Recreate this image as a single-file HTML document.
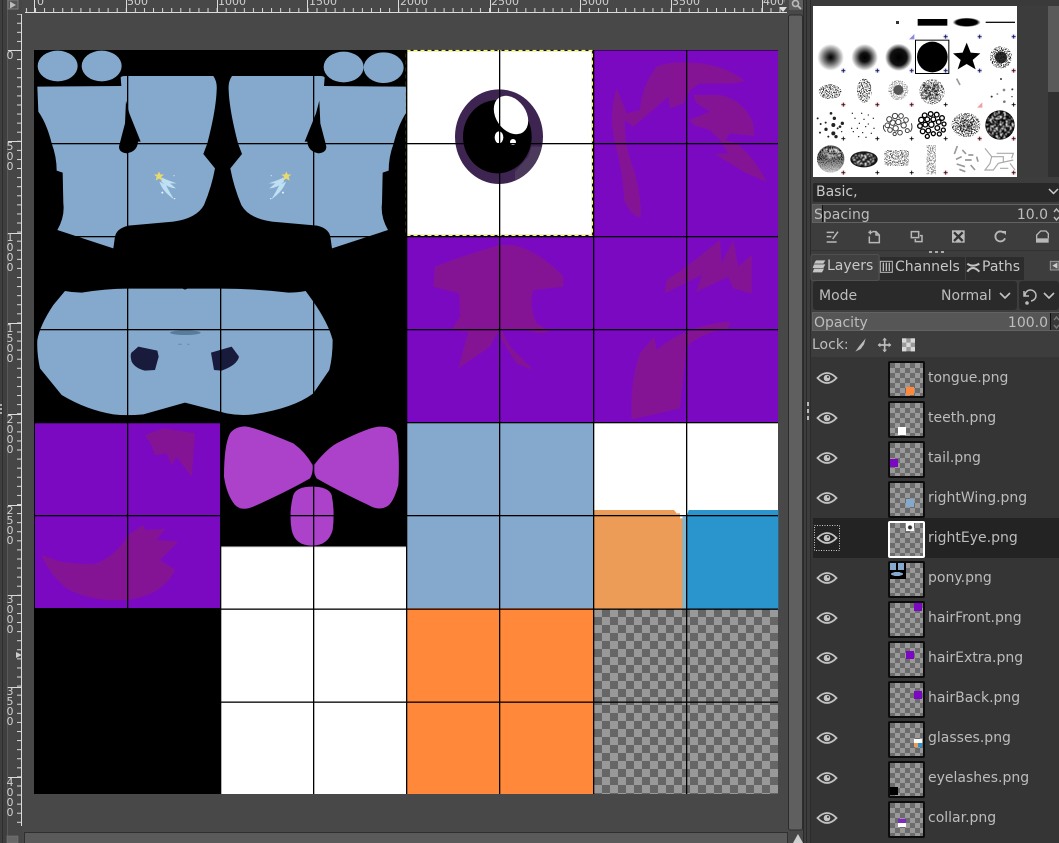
<!DOCTYPE html>
<html><head><meta charset="utf-8"><style>
html,body{margin:0;padding:0;background:#484848}
body{width:1059px;height:843px;position:relative;overflow:hidden;font-family:"DejaVu Sans",sans-serif;font-size:14px;color:#bdbdbd}
svg{position:absolute;left:0;top:0}
.t{position:absolute;white-space:nowrap;line-height:20px;height:20px}
.r{font-size:11px;color:#cfcfcf;line-height:10px;position:absolute}
.rv{font-size:11px;color:#cfcfcf;line-height:10px;position:absolute;left:6px;width:8px;text-align:center;white-space:pre-line}
.th{position:absolute;left:888px;width:33px;height:33px;border:2px solid #0c0c0c;border-radius:2px;background:conic-gradient(#999 25%,#6c6c6c 0 50%,#999 0 75%,#6c6c6c 0) 0 0/10px 10px}
.th i{position:absolute;display:block;width:8px;height:8px}
.l{position:absolute;left:928px;white-space:nowrap;line-height:20px;color:#bcbcbc}
</style></head><body>
<svg width="1059" height="843" viewBox="0 0 1059 843">
<defs>
<filter id="n" x="-10%" y="-10%" width="120%" height="120%"><feTurbulence type="fractalNoise" baseFrequency=".17" numOctaves="2" seed="3"/><feColorMatrix result="m" values="0 0 0 0 0 0 0 0 0 0 0 0 0 0 0 0 0 0 9 -4.5"/><feComposite in="SourceGraphic" in2="m" operator="in"/><feGaussianBlur stdDeviation="1.2"/></filter>
<filter id="n2" x="-10%" y="-10%" width="120%" height="120%"><feTurbulence type="fractalNoise" baseFrequency=".3" numOctaves="2" seed="8"/><feColorMatrix result="m" values="0 0 0 0 0 0 0 0 0 0 0 0 0 0 0 0 0 0 9 -4.4"/><feComposite in="SourceGraphic" in2="m" operator="in"/><feGaussianBlur stdDeviation="1"/></filter>
<filter id="bl" x="-10%" y="-10%" width="120%" height="120%"><feGaussianBlur stdDeviation="1"/></filter>
<radialGradient id="b1"><stop offset="0" stop-color="#000"/><stop offset=".2" stop-color="#222"/><stop offset="1" stop-color="#000" stop-opacity="0"/></radialGradient>
<radialGradient id="b2"><stop offset="0" stop-color="#000"/><stop offset=".35" stop-color="#111"/><stop offset="1" stop-color="#000" stop-opacity="0"/></radialGradient>
<radialGradient id="b3"><stop offset="0" stop-color="#000"/><stop offset=".6" stop-color="#111"/><stop offset="1" stop-color="#000" stop-opacity="0"/></radialGradient>
<radialGradient id="bg"><stop offset="0" stop-color="#000"/><stop offset=".75" stop-color="#000"/><stop offset="1" stop-color="#000" stop-opacity="0"/></radialGradient>
<linearGradient id="sg" x1="0" y1="0" x2="0" y2="1"><stop offset="0" stop-color="#000"/><stop offset=".45" stop-color="#111"/><stop offset="1" stop-color="#bbb"/></linearGradient>
<pattern id="ck" x="594" y="609" width="16" height="16" patternUnits="userSpaceOnUse"><rect width="16" height="16" fill="#666"/><rect width="8" height="8" fill="#999"/><rect x="8" y="8" width="8" height="8" fill="#999"/></pattern>
<pattern id="tx" x="35" y="0" width="9.08" height="4" patternUnits="userSpaceOnUse"><rect x="0" width="1" height="4" fill="#d8d8d8"/></pattern>
<pattern id="ty" x="0" y="50" width="4" height="9.08" patternUnits="userSpaceOnUse"><rect y="0" width="4" height="1" fill="#d8d8d8"/></pattern>
<g id="eye" fill="none" stroke="#c4c4c4"><path d="M-9.500 0Q0-10 9.500 0Q0 10-9.500 0Z" stroke-width="1.800"/><circle r="3.300" fill="#c4c4c4" stroke="none"/><circle cx="1" cy="-1" r="1" fill="#333" stroke="none"/></g>
<g id="pl"><path d="M-6 0H6M0-6V6" stroke="#000" stroke-width="2.600"/></g>
<g id="sl"><rect x="-6" y="-6" width="12" height="12" fill="#c8c8f0" opacity=".8"/><path d="M-6 0H6M0-6V6" stroke="#11115a" stroke-width="2.600"/></g>
<g id="rd"><rect x="-6" y="-6" width="12" height="12" fill="#f0c8c8" opacity=".8"/><path d="M-6 0H6M0-6V6" stroke="#3a0a1a" stroke-width="2.600"/></g>
<path id="wb" d="M112 260L364 258L362 232Q365 228 375 228H640Q652 245 650 270Q648 330 622 430L610 462L645 505Q635 560 612 615Q590 655 520 665L385 677Q350 685 345 710L340 745L172 690Q195 650 190 610L188 518L170 512Q170 470 155 430Q140 370 115 335ZM378 302L375 370L362 420L357 440Q357 458 380 460Q412 455 414 425H422L388 340Z" fill-rule="evenodd" fill="#84a9cc"/>
<g id="cm"><path d="M484 545Q505 565 528 565L510 550L530 550Q500 540 486 533ZM478 545Q488 575 522 598Q505 570 498 555Z" fill="#bfe0f2"/><path d="M477 514l4 9 11 1-8 6 3 12-10-6-10 6 3-12-8-6 11-1z" fill="#e8da6e"/><circle cx="487" cy="578" r="3" fill="#eef"/><circle cx="524" cy="596" r="2" fill="#eef"/><circle cx="522" cy="527" r="2" fill="#cde"/></g>
</defs>

<!-- frame -->
<rect width="1059" height="843" fill="#484848"/>
<rect x="0" y="0" width="7" height="843" fill="#3f3f3f"/>
<rect x="2" y="0" width="1" height="843" fill="#2e2e2e"/>
<rect x="7" y="0" width="1" height="843" fill="#5a5a5a"/>
<rect x="8" width="14" height="843" fill="#464646"/>
<rect x="0" y="404" width="2" height="2" fill="#aaa"/><rect x="0" y="408" width="2" height="2" fill="#aaa"/><rect x="0" y="412" width="2" height="2" fill="#aaa"/>

<!-- canvas -->
<rect x="34" y="50" width="744" height="744" fill="#000"/>
<g transform="scale(.33333)">
<ellipse cx="173" cy="198" rx="60" ry="46" fill="#84a9cc"/><ellipse cx="305" cy="198" rx="60" ry="46" fill="#84a9cc"/>
<ellipse cx="1031" cy="201" rx="60" ry="46" fill="#84a9cc"/><ellipse cx="1151" cy="203" rx="60" ry="46" fill="#84a9cc"/>
<use href="#wb"/><use href="#cm"/>
<g transform="translate(1336,0) scale(-1,1)"><use href="#wb"/><use href="#cm"/></g>
<path d="M195 873Q220 878 245 878Q320 866 380 866H548L555 869L562 866H660Q770 866 865 878Q890 878 917 873L940 905Q985 970 998 1020Q998 1070 988 1110L940 1180Q880 1225 760 1243Q720 1248 680 1240L555 1208L430 1243Q380 1248 340 1243Q260 1230 185 1185L120 1105Q110 1060 112 1020Q120 975 160 915Z" fill="#84a9cc"/>
<path d="M415 1040L472 1052L476 1070L465 1110L435 1112Q405 1105 395 1085Q388 1060 398 1055ZM695 1040L717 1070Q712 1095 665 1112L642 1110L633 1058Z" fill="#181b3c"/>
<ellipse cx="556" cy="998" rx="46" ry="7" fill="#587c9c"/><ellipse cx="540" cy="1033" rx="6" ry="2" fill="#6d90b0"/><ellipse cx="565" cy="1033" rx="4" ry="2" fill="#6d90b0"/>
</g>
<!-- purple tiles -->
<rect x="593" y="50.500" width="185" height="186" fill="#7c09c2"/>
<rect x="406.500" y="236" width="186.500" height="186" fill="#7c09c2"/>
<rect x="593" y="236" width="185" height="186" fill="#7c09c2"/>
<rect x="35" y="422" width="185" height="186" fill="#7c09c2"/>
<!-- hair shapes -->
<g transform="translate(400,0) scale(.33333)" fill="#851494">
<path d="M650 265L680 340L720 330Q725 260 770 200Q810 185 850 188Q960 185 1035 243L1000 250L900 250L870 270L850 310L810 325L805 290L770 320L700 380L675 360Q670 430 705 520Q725 600 722 652Q695 650 672 600Q670 520 645 430Q625 340 650 265Z"/>
<path d="M880 285H960Q1030 300 1060 370L1062 408L990 400L975 420L1010 430Q1060 470 1100 545L1040 520L945 462L985 460L960 420L930 390L880 375L870 360L930 335L890 310Z"/>
<path d="M300 735H340Q420 755 490 830V860L400 870Q385 920 410 970L450 995L420 1000L375 990H305L330 1040L400 1110L350 1090L305 1020L297 990L270 1040L175 1105L205 995L155 990L180 950L178 880L100 860L105 800Q180 770 300 735Z"/>
<path d="M960 720L965 790L1000 720L1015 800L1055 765V880L1000 865L985 830L890 875L905 825L795 880L800 840L860 800Z"/>
<path d="M990 965L985 985Q900 1000 860 1040L840 1225L695 1258Q690 1140 720 1060L762 1010L770 1050Q860 975 990 965Z"/>
</g>
<g transform="translate(0,415) scale(.33333)" fill="#851494">
<path d="M435 60L490 40L585 55L575 185L530 125L515 150L500 115L465 120L455 90Z"/>
<path d="M125 420L180 440Q250 450 290 445Q350 420 385 360L430 330L435 345L495 342L470 375L535 380L480 435L525 465Q490 540 380 555Q270 560 200 520Q150 480 125 420Z"/>
</g>
<!-- eye tile -->
<rect x="406.500" y="50.500" width="186" height="185" fill="#fff"/>
<g transform="translate(400,0) scale(.33333)">
<ellipse cx="297" cy="410" rx="132" ry="142" fill="#3e2450"/>
<path d="M425 440A132 142 0 0 1 345 542L345 515L385 470L395 440Z" fill="#4c3a5c"/>
<ellipse cx="292" cy="410" rx="103" ry="110" fill="#000"/>
<ellipse cx="333" cy="345" rx="45" ry="63" transform="rotate(-35 333 345)" fill="#fff"/>
<ellipse cx="297" cy="412" rx="13" ry="18" fill="#fff"/><circle cx="339" cy="426" r="9" fill="#fff"/>
</g>
<rect x="406.500" y="50.500" width="186" height="185" fill="none" stroke="#111" stroke-width="1.200"/>
<rect x="406.500" y="50.500" width="186" height="185" fill="none" stroke="#ffff50" stroke-width="1.300" stroke-dasharray="4 3"/>
<!-- bow -->
<rect x="220.500" y="547" width="186" height="247" fill="#fff"/>
<rect x="220.500" y="546.500" width="186" height="1" fill="#ddd"/>
<g transform="translate(0,415) scale(.33333)" fill="#ac42c9">
<path d="M735 34Q760 35 880 85Q915 110 938 150Q940 175 930 190Q870 225 760 275Q725 290 705 270Q680 240 672 185Q672 90 690 55Q705 35 735 34Z"/>
<path d="M1135 35Q1180 32 1190 60Q1200 120 1195 210Q1180 265 1160 275Q1135 288 1105 270Q1010 225 950 190Q938 170 942 150Q985 95 1020 80Q1100 40 1135 35Z"/>
<path d="M880 240Q890 215 936 215Q985 215 995 240Q1005 290 998 345Q985 392 936 392Q885 392 875 345Q866 290 880 240Z"/>
</g>
<!-- lower tiles -->
<rect x="406.500" y="422" width="186.500" height="186" fill="#84a9cc"/>
<rect x="593" y="422" width="185" height="187" fill="#fff"/>
<g transform="translate(400,415) scale(.33333)">
<path d="M581 285H822L830 295H840V310H848V582H581Z" fill="#ed9c58"/>
<path d="M866 285H1135V582H848V305H860Z" fill="#2a94cc"/>
<rect x="848" y="305" width="10" height="277" fill="#7fb6d0"/>
</g>
<rect x="406.500" y="608" width="186.500" height="186" fill="#ff883a"/>
<rect x="594" y="609" width="184" height="185" fill="url(#ck)"/>
<!-- grid -->
<g fill="#000">
<rect x="127" y="50" width="1.300" height="744"/><rect x="220" y="236" width="1.300" height="558"/><rect x="313" y="50" width="1.300" height="744"/><rect x="406" y="50" width="1.300" height="744"/><rect x="499" y="50" width="1.300" height="744"/><rect x="593" y="50" width="1.300" height="744"/><rect x="686" y="50" width="1.300" height="744"/>
<rect x="34" y="143" width="744" height="1.300"/><rect x="34" y="236" width="744" height="1.300"/><rect x="34" y="329" width="744" height="1.300"/><rect x="34" y="422" width="744" height="1.300"/><rect x="34" y="515" width="744" height="1.300"/><rect x="34" y="608.500" width="744" height="1.300"/><rect x="220" y="701.500" width="558" height="1.300"/>
</g>

<!-- rulers -->
<rect x="25" y="12" width="762" height="1" fill="#dcdcdc"/>
<rect x="25" y="8" width="762" height="4" fill="url(#tx)"/>
<rect x="21" y="14" width="1" height="812" fill="#dcdcdc"/>
<rect x="17" y="14" width="4" height="812" fill="url(#ty)"/>
<g fill="#dcdcdc">
<rect x="34" width="1" height="12"/><rect x="126" width="1" height="12"/><rect x="217" width="1" height="12"/><rect x="307" width="1" height="12"/><rect x="398" width="1" height="12"/><rect x="490" width="1" height="12"/><rect x="580" width="1" height="12"/><rect x="671" width="1" height="12"/><rect x="762" width="1" height="12"/>
<rect x="8" y="50" width="13" height="1"/><rect x="8" y="141" width="13" height="1"/><rect x="8" y="233" width="13" height="1"/><rect x="8" y="323" width="13" height="1"/><rect x="8" y="414" width="13" height="1"/><rect x="8" y="505" width="13" height="1"/><rect x="8" y="595" width="13" height="1"/><rect x="8" y="687" width="13" height="1"/><rect x="8" y="777" width="13" height="1"/>
</g>
<rect x="8" y="0" width="10" height="9" fill="#555" stroke="#888" stroke-width=".8"/>
<path d="M10 1.500L16 5L10 8.500Z" fill="#bbb"/>
<path d="M15 652L21 655L15 658Z" fill="#ccc" transform="translate(1,0)"/>
<path d="M779 7L787 7L783 12Z" fill="#ddd"/>
<rect x="789" y="0" width="14" height="10" fill="#5d5d5d"/>
<circle cx="795.500" cy="3.500" r="3" fill="none" stroke="#bbb" stroke-width="1.600"/><path d="M798 6L801 9" stroke="#bbb" stroke-width="1.800"/>

<!-- scrollbars -->
<rect x="788.500" y="15" width="14" height="815" rx="2" fill="#5f5f5f" stroke="#2c2c2c"/>
<rect x="24" y="832" width="764" height="11" fill="#5a5a5a"/><rect x="24" y="832" width="764" height="1" fill="#2f2f2f"/><rect x="24" y="832" width="1" height="11" fill="#2f2f2f"/>
<rect x="7" y="836" width="11" height="7" fill="#666" stroke="#777" stroke-width=".6"/>
<path d="M793 843L798 834L803 843Z" fill="#cfcfcf"/>
<rect x="787" y="832" width="1" height="11" fill="#2f2f2f"/>

<!-- right panel -->
<rect x="803" y="0" width="256" height="843" fill="#3d3d3d"/>
<rect x="803" y="0" width="1" height="843" fill="#2a2a2a"/><rect x="806" y="0" width="1" height="843" fill="#2a2a2a"/><rect x="810" y="0" width="1" height="843" fill="#2b2b2b"/>
<rect x="807" y="402" width="2" height="4" fill="#bbb"/><rect x="807" y="409" width="2" height="4" fill="#bbb"/><rect x="807" y="416" width="2" height="4" fill="#bbb"/>
<rect x="811" y="0" width="248" height="6" fill="#3a3a3a"/>
<rect x="1017" y="6" width="31" height="171" fill="#3c3c3c"/>
<rect x="1048" y="6" width="11" height="86" fill="#5a5a5a"/><rect x="1048" y="92" width="11" height="85" fill="#303030"/>
<rect x="813" y="6" width="204" height="171" fill="#fff"/>

<!-- brushes -->
<g transform="translate(800,0) scale(.33333)">
<rect x="288" y="63" width="9" height="9" fill="#333"/>
<rect x="353" y="57" width="89" height="20" fill="#000" filter="url(#bl)"/>
<ellipse cx="500" cy="67" rx="42" ry="14" fill="url(#bg)"/>
<rect x="557" y="65" width="88" height="4" fill="#111"/>
<path d="M343 102V118H327Z" fill="#8a8ae0"/>
<use href="#sl" x="437" y="110"/><use href="#sl" x="539" y="110"/><use href="#sl" x="641" y="110"/>
<circle cx="92" cy="172" r="40" fill="url(#b1)"/><circle cx="194" cy="172" r="40" fill="url(#b2)"/><circle cx="296" cy="172" r="41" fill="url(#b3)"/>
<circle cx="397" cy="171" r="46" fill="#000"/>
<rect x="346.500" y="120.500" width="100" height="100" fill="none" stroke="#000" stroke-width="3"/>
<path d="M500 128L512 158L541 160L518 180L527 208L500 192L473 208L482 180L459 160L488 158Z" fill="#000"/>
<circle cx="603" cy="172" r="33" fill="#222" filter="url(#n2)"/><circle cx="603" cy="172" r="18" fill="#111" opacity=".85" filter="url(#bl)"/>
<use href="#sl" x="130" y="212"/><use href="#sl" x="232" y="212"/><use href="#sl" x="335" y="212"/><use href="#sl" x="437" y="212"/><use href="#sl" x="539" y="212"/><use href="#rd" x="641" y="212"/>
<ellipse cx="90" cy="275" rx="34" ry="22" fill="#222" filter="url(#n2)"/>
<ellipse cx="193" cy="272" rx="22" ry="36" fill="#333" filter="url(#n2)"/>
<circle cx="295" cy="270" r="30" fill="#888" filter="url(#n2)"/><circle cx="295" cy="270" r="15" fill="#555" filter="url(#bl)"/>
<ellipse cx="396" cy="275" rx="38" ry="38" fill="#444" filter="url(#n2)"/><rect x="368" y="252" width="48" height="45" fill="#000" filter="url(#n)"/>
<path d="M470 236L480 255" stroke="#999" stroke-width="5"/>
<g fill="#333"><circle cx="603" cy="237" r="3"/><circle cx="637" cy="268" r="3"/><circle cx="575" cy="290" r="3"/><circle cx="612" cy="270" r="4" fill="#888"/><circle cx="592" cy="282" r="3" fill="#999"/><circle cx="613" cy="305" r="4" fill="#777"/><circle cx="636" cy="290" r="2"/></g>
<use href="#rd" x="130" y="314"/><use href="#rd" x="232" y="314"/><use href="#rd" x="335" y="314"/><use href="#pl" x="437" y="314"/><path d="M547 307V323H531Z" fill="#f0a0a0"/><use href="#pl" x="641" y="314"/>
<g fill="#222"><circle cx="53" cy="355" r="3"/><circle cx="93" cy="340" r="4"/><circle cx="103" cy="355" r="5"/><circle cx="77" cy="368" r="3"/><circle cx="100" cy="375" r="6"/><circle cx="127" cy="370" r="5"/><circle cx="62" cy="372" r="3"/><circle cx="78" cy="388" r="5"/><circle cx="60" cy="398" r="3"/><circle cx="100" cy="400" r="6"/><circle cx="113" cy="385" r="3"/><circle cx="85" cy="410" r="3"/><circle cx="108" cy="410" r="5"/><circle cx="125" cy="395" r="2"/><circle cx="120" cy="380" r="4"/>
<circle cx="157" cy="340" r="2"/><circle cx="185" cy="340" r="2"/><circle cx="205" cy="345" r="2"/><circle cx="165" cy="355" r="2"/><circle cx="192" cy="358" r="2"/><circle cx="220" cy="355" r="2"/><circle cx="178" cy="370" r="2"/><circle cx="205" cy="372" r="2"/><circle cx="155" cy="385" r="2"/><circle cx="172" cy="385" r="2"/><circle cx="197" cy="380" r="2"/><circle cx="222" cy="385" r="2"/><circle cx="160" cy="395" r="2"/><circle cx="188" cy="398" r="2"/><circle cx="214" cy="400" r="2"/><circle cx="176" cy="410" r="2"/><circle cx="198" cy="412" r="2"/></g>
<g fill="none" stroke="#000" stroke-width="3">
<g opacity=".75"><circle cx="268" cy="358" r="8"/><circle cx="285" cy="348" r="8"/><circle cx="303" cy="348" r="7"/><circle cx="318" cy="360" r="7"/><circle cx="262" cy="376" r="7"/><circle cx="278" cy="368" r="8"/><circle cx="295" cy="366" r="8"/><circle cx="311" cy="376" r="8"/><circle cx="270" cy="390" r="7"/><circle cx="287" cy="385" r="8"/><circle cx="300" cy="398" r="7"/><circle cx="322" cy="392" r="6"/><circle cx="284" cy="402" r="5"/><path d="M252 375q-5 10 5 20M334 370q5 15-3 25"/></g>
<g stroke-width="4"><circle cx="374" cy="346" r="7"/><circle cx="392" cy="342" r="7"/><circle cx="410" cy="344" r="7"/><circle cx="426" cy="354" r="7"/><circle cx="364" cy="360" r="8"/><circle cx="382" cy="358" r="7"/><circle cx="400" cy="358" r="7"/><circle cx="416" cy="366" r="7"/><circle cx="432" cy="372" r="6"/><circle cx="360" cy="378" r="7"/><circle cx="376" cy="374" r="7"/><circle cx="394" cy="374" r="8"/><circle cx="412" cy="384" r="7"/><circle cx="430" cy="390" r="6"/><circle cx="368" cy="394" r="7"/><circle cx="385" cy="392" r="7"/><circle cx="400" cy="401" r="6"/><circle cx="418" cy="402" r="6"/><circle cx="382" cy="409" r="6"/></g></g>
<ellipse cx="498" cy="375" rx="43" ry="36" fill="#222" filter="url(#n2)"/><ellipse cx="498" cy="378" rx="22" ry="20" fill="#000" filter="url(#n)"/>
<circle cx="600" cy="375" r="44" fill="#000"/><circle cx="600" cy="375" r="42" fill="#fff" filter="url(#n)"/>
<use href="#pl" x="130" y="416"/><use href="#pl" x="232" y="416"/><use href="#pl" x="335" y="416"/><use href="#pl" x="437" y="416"/><use href="#rd" x="539" y="416"/><use href="#rd" x="641" y="416"/>
<circle cx="92" cy="477" r="41" fill="url(#sg)" filter="url(#n2)"/><circle cx="92" cy="477" r="41" fill="url(#sg)" opacity=".6"/><ellipse cx="95" cy="460" rx="30" ry="16" fill="#fff" filter="url(#n)"/>
<ellipse cx="192" cy="478" rx="41" ry="24" fill="#111"/><ellipse cx="192" cy="478" rx="36" ry="20" fill="#fff" filter="url(#n)"/>
<rect x="253" y="450" width="74" height="48" rx="10" fill="#555" filter="url(#n2)"/>
<rect x="380" y="435" width="28" height="88" fill="#777" filter="url(#n2)"/>
<g stroke="#999" stroke-width="5"><path d="M472 438L463 462M487 450L498 462M505 465H520M468 478L485 470M495 480H515M530 470L534 485M470 492L495 500M478 508L496 515M512 495L525 510"/></g>
<path d="M555 445L575 470L570 490L555 510H580L595 490L640 480M575 470H610V485M590 460H640L635 475M630 490L645 510M600 505H625" fill="none" stroke="#aaa" stroke-width="3.500"/>
<use href="#rd" x="130" y="518"/><use href="#pl" x="232" y="518"/><use href="#pl" x="335" y="518"/><use href="#rd" x="437" y="518"/><use href="#rd" x="641" y="518"/>
</g>

<!-- brush options -->
<rect x="813" y="183" width="246" height="19" rx="2" fill="#282828"/>
<path d="M1049 189l4.500 4.500 4.500-4.500" fill="none" stroke="#ccc" stroke-width="1.500"/>
<rect x="812.500" y="204.500" width="247" height="18" fill="#383838" stroke="#626262"/>
<rect x="813" y="205" width="9" height="17" fill="#555"/><rect x="822" y="205" width="1" height="17" fill="#111"/>
<path d="M1054 212l2.500-3 2.500 3M1054 217l2.500 3 2.500-3" fill="none" stroke="#bbb" stroke-width="1.400"/>
<g transform="translate(800,175) scale(.33333)" fill="none" stroke="#b8b8b8" stroke-width="4.500">
<path d="M80 172H102M80 185H94M80 201H110M98 192L114 170"/>
<path d="M205 172H217M211 166V178M217 170H228L238 180V203H208V184M228 170V180H238"/>
<path d="M334 170H356V188H334ZM360 182H366V200H346V192"/>
<rect x="456" y="166" width="38" height="37" fill="#bbb" stroke="none"/><path d="M462 172L488 198M488 172L462 198" stroke="#333" stroke-width="7"/>
<path d="M612 174A15 15 0 1 0 615 190" stroke-width="5.500"/><path d="M605 168H618V180Z" fill="#b8b8b8" stroke="none"/>
<path d="M710 190V180L722 168H738L745 176V190" stroke-width="4"/><rect x="708" y="190" width="38" height="13" fill="#b8b8b8" stroke="none"/>
</g>
<rect x="929" y="250" width="3" height="3" fill="#aaa"/><rect x="935" y="250" width="3" height="3" fill="#aaa"/><rect x="941" y="250" width="3" height="3" fill="#aaa"/>
<rect x="811" y="250" width="248" height="1" fill="#333"/>

<!-- tabs -->
<rect x="811" y="254.500" width="68" height="26" rx="2" fill="#404040" stroke="#505050"/>
<rect x="880" y="257" width="85" height="23" fill="#2c2c2c"/>
<rect x="966" y="257" width="58" height="23" fill="#2c2c2c"/>
<g transform="translate(800,175) scale(.33333)">
<path d="M48 256H76L70 266H42ZM42 268H76L70 279H38ZM42 281H72L66 292H38Z" fill="#c6c6c6"/>
<rect x="241" y="259" width="36" height="33" fill="none" stroke="#bbb" stroke-width="3"/><path d="M250 263V288M259 263V288M268 263V288" stroke="#bbb" stroke-width="4"/>
<path d="M502 266Q518 278 538 266M502 290Q518 268 538 290" fill="none" stroke="#c4c4c4" stroke-width="6"/>
<rect x="751" y="259" width="26" height="26" fill="#555" stroke="#999" stroke-width="3"/><path d="M772 263L757 272L772 281Z" fill="#ccc"/>
</g>
<!-- mode -->
<rect x="813" y="281" width="204" height="29" rx="3" fill="#2a2a2a"/>
<rect x="1019" y="281" width="40" height="29" rx="3" fill="#2a2a2a"/>
<path d="M1000 293l5 5 5-5M1044 293l5 5 5-5" fill="none" stroke="#c4c4c4" stroke-width="1.600"/>
<path d="M1025 296A5.500 5.500 0 1 1 1031 301M1024 291V296H1029" fill="none" stroke="#bbb" stroke-width="1.500"/><circle cx="1027" cy="303" r="1.800" fill="#bbb"/>
<!-- opacity -->
<rect x="812.500" y="312.500" width="247" height="18" fill="#383838" stroke="#626262"/>
<rect x="813" y="313" width="237" height="17" fill="#565656"/><rect x="1050" y="313" width="1" height="17" fill="#111"/>
<path d="M1054 320l2.500-3 2.500 3M1054 325l2.500 3 2.500-3" fill="none" stroke="#777" stroke-width="1.400"/>
<!-- lock icons -->
<g transform="translate(800,175) scale(.33333)">
<path d="M197 490L178 513L166 530L182 522L192 508Z" fill="#bbb"/>
<path d="M254 490V528M235 510H272" stroke="#bbb" stroke-width="5"/><path d="M254 488l-7 8h14zM254 532l-7-8h14zM233 510l8-7v14zM274 510l-8-7v14z" fill="#bbb"/>
<rect x="306" y="490" width="39" height="39" fill="#9a9a9a"/><path d="M306 490h13v13h-13zM332 490h13v13h-13zM319 503h13v13h-13zM306 516h13v13h-13zM332 516h13v13h-13z" fill="#d8d8d8"/>
</g>
<!-- layer list -->
<rect x="811" y="357" width="248" height="486" fill="#353535"/>
<rect x="813" y="518" width="246" height="40" fill="#232323"/>
<rect x="814.500" y="525.500" width="25" height="25" fill="none" stroke="#ccc" stroke-dasharray="1 1.500"/>
<g>
<use href="#eye" x="827" y="378"/><use href="#eye" x="827" y="418"/><use href="#eye" x="827" y="458"/><use href="#eye" x="827" y="498"/><use href="#eye" x="827" y="538"/><use href="#eye" x="827" y="578"/><use href="#eye" x="827" y="618"/><use href="#eye" x="827" y="658"/><use href="#eye" x="827" y="698"/><use href="#eye" x="827" y="738"/><use href="#eye" x="827" y="778"/><use href="#eye" x="827" y="818"/>
</g>
</svg>

<!-- ruler labels -->
<div class="r" style="left:37px;top:-3px">0</div>
<div class="r" style="left:127px;top:-3px">500</div>
<div class="r" style="left:218px;top:-3px">1000</div>
<div class="r" style="left:309px;top:-3px">1500</div>
<div class="r" style="left:400px;top:-3px">2000</div>
<div class="r" style="left:491px;top:-3px">2500</div>
<div class="r" style="left:581px;top:-3px">3000</div>
<div class="r" style="left:672px;top:-3px">3500</div>
<div class="r" style="left:763px;top:-3px;width:22px;overflow:hidden">4000</div>
<div class="rv" style="top:51px">0</div>
<div class="rv" style="top:142px">5
0
0</div>
<div class="rv" style="top:233px">1
0
0
0</div>
<div class="rv" style="top:324px">1
5
0
0</div>
<div class="rv" style="top:415px">2
0
0
0</div>
<div class="rv" style="top:506px">2
5
0
0</div>
<div class="rv" style="top:595px">3
0
0
0</div>
<div class="rv" style="top:687px">3
5
0
0</div>
<div class="rv" style="top:778px">4
0
0
0</div>

<!-- panel text -->
<div class="t" style="left:816px;top:182px;color:#c8c8c8">Basic,</div>
<div class="t" style="left:814px;top:205px">Spacing</div>
<div class="t" style="right:11px;top:205px">10.0</div>
<div class="t" style="left:827px;top:256px;color:#c8c8c8">Layers</div>
<div class="t" style="left:895px;top:257px;color:#c8c8c8">Channels</div>
<div class="t" style="left:982px;top:257px;color:#c8c8c8">Paths</div>
<div class="t" style="left:819px;top:286px">Mode</div>
<div class="t" style="left:941px;top:286px">Normal</div>
<div class="t" style="left:814px;top:313px">Opacity</div>
<div class="t" style="right:11px;top:313px">100.0</div>
<div class="t" style="left:812px;top:335px">Lock:</div>

<!-- layers -->
<div class="th" style="top:361px"><i style="left:16px;top:24px;background:#ff883a"></i></div><div class="l" style="top:368px">tongue.png</div>
<div class="th" style="top:401px"><i style="left:8px;top:24px;background:#fff"></i></div><div class="l" style="top:408px">teeth.png</div>
<div class="th" style="top:441px"><i style="left:0;top:16px;background:#7c09c2"></i></div><div class="l" style="top:448px">tail.png</div>
<div class="th" style="top:481px"><i style="left:16px;top:16px;background:#84a9cc"></i></div><div class="l" style="top:488px">rightWing.png</div>
<div class="th" style="top:521px;border-color:#fff"><i style="left:16px;top:0;background:radial-gradient(circle at 50% 55%,#333 0 1.500px,#fff 2.500px)"></i></div><div class="l" style="top:528px">rightEye.png</div>
<div class="th" style="top:561px"><i style="left:0;top:0;width:16px;height:16px;background:radial-gradient(ellipse 6px 2px at 7px 11px,#84a9cc 98%,transparent),linear-gradient(90deg,#84a9cc 0 6px,#000 6px 8px,#84a9cc 8px 14px,#000 14px) 0 0/16px 7px no-repeat,#000"></i></div><div class="l" style="top:568px">pony.png</div>
<div class="th" style="top:601px"><i style="left:24px;top:0;background:#7c09c2"></i></div><div class="l" style="top:608px">hairFront.png</div>
<div class="th" style="top:641px"><i style="left:16px;top:8px;background:#7c09c2"></i></div><div class="l" style="top:648px">hairExtra.png</div>
<div class="th" style="top:681px"><i style="left:24px;top:8px;background:#7c09c2"></i></div><div class="l" style="top:688px">hairBack.png</div>
<div class="th" style="top:721px"><i style="left:24px;top:16px;background:linear-gradient(#fff 0 4px,transparent 4px),linear-gradient(90deg,#ed9c58 0 4px,#2a94cc 4px)"></i></div><div class="l" style="top:728px">glasses.png</div>
<div class="th" style="top:761px"><i style="left:0;top:24px;background:#000"></i></div><div class="l" style="top:768px">eyelashes.png</div>
<div class="th" style="top:801px"><i style="left:8px;top:16px;background:linear-gradient(#7c2ac2 0 4px,#fff 4px)"></i></div><div class="l" style="top:808px">collar.png</div>
</body></html>
